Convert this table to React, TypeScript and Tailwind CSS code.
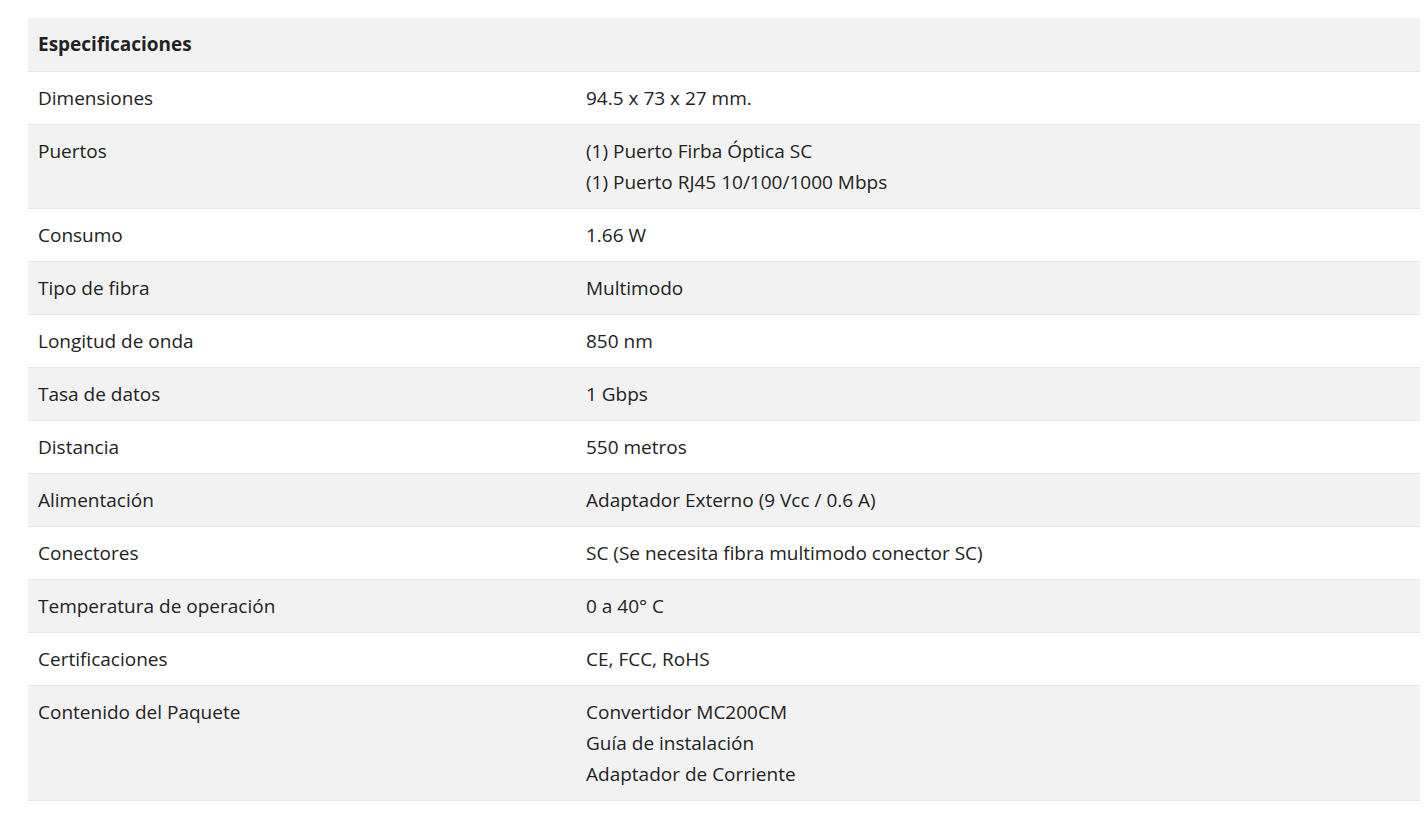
import React from 'react';

const specs: { label: string; value: string[] }[] = [
  { label: 'Dimensiones', value: ['94.5 x 73 x 27 mm.'] },
  { label: 'Puertos', value: ['(1) Puerto Firba Óptica SC', '(1) Puerto RJ45 10/100/1000 Mbps'] },
  { label: 'Consumo', value: ['1.66 W'] },
  { label: 'Tipo de fibra', value: ['Multimodo'] },
  { label: 'Longitud de onda', value: ['850 nm'] },
  { label: 'Tasa de datos', value: ['1 Gbps'] },
  { label: 'Distancia', value: ['550 metros'] },
  { label: 'Alimentación', value: ['Adaptador Externo (9 Vcc / 0.6 A)'] },
  { label: 'Conectores', value: ['SC (Se necesita fibra multimodo conector SC)'] },
  { label: 'Temperatura de operación', value: ['0 a 40° C'] },
  { label: 'Certificaciones', value: ['CE, FCC, RoHS'] },
  { label: 'Contenido del Paquete', value: ['Convertidor MC200CM', 'Guía de instalación', 'Adaptador de Corriente'] },
];

export default function App() {
  return (
    <div className="min-h-screen bg-white pt-[18px] pl-[28px] pr-[7px] font-['Open_Sans',sans-serif] text-[#222]">
      <table className="w-full table-fixed border-collapse text-[19px] leading-[31px]">
        <colgroup>
          <col className="w-[548px]" />
          <col />
        </colgroup>
        <thead>
          <tr className="bg-[#f2f2f2] border-b border-[#e6e6e6]">
            <th className="text-left font-bold px-[10px] py-[11px]">Especificaciones</th>
            <th className="px-[10px] py-[11px]"></th>
          </tr>
        </thead>
        <tbody>
          {specs.map((row, i) => (
            <tr
              key={row.label}
              className={(i % 2 === 1 ? 'bg-[#f2f2f2]' : 'bg-white') + ' border-b border-[#e6e6e6]'}
            >
              <td className="align-top px-[10px] pt-[11px] pb-[10px]">{row.label}</td>
              <td className="align-top px-[10px] pt-[11px] pb-[10px]">
                {row.value.map((v) => (
                  <div key={v}>{v}</div>
                ))}
              </td>
            </tr>
          ))}
        </tbody>
      </table>
    </div>
  );
}
